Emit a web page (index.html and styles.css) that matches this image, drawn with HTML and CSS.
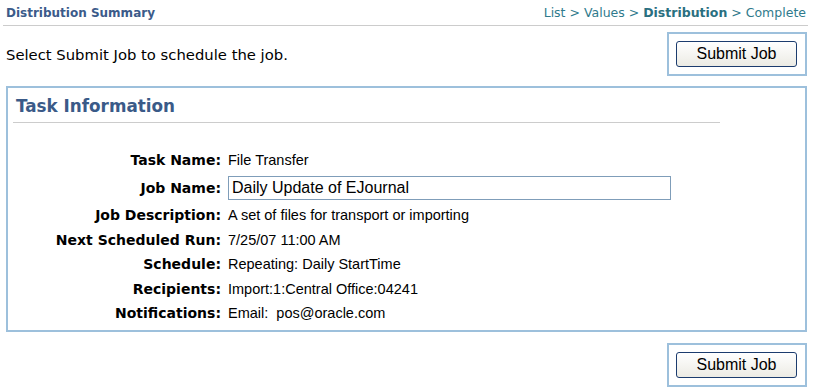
FILE: index.html
```html
<!DOCTYPE html>
<html lang="en">
<head>
    <meta charset="UTF-8">
    <title>Distribution Summary</title>
    <link rel="stylesheet" href="styles.css">
</head>
<body>
    <div class="page-header">
        <span class="page-title">Distribution Summary</span>
        <span class="crumbs">List &gt; Values &gt; <b>Distribution</b> &gt; Complete</span>
    </div>
    <div class="intro-row">
        <p class="intro">Select Submit Job to schedule the job.</p>
        <div class="btn-box"><button class="submit">Submit Job</button></div>
    </div>
    <div class="task-box">
        <h2 class="task-title">Task Information</h2>
        <div class="fields">
            <label>Task Name:</label><span>File Transfer</span>
            <label for="jobName">Job Name:</label><span><input type="text" id="jobName" value="Daily Update of EJournal"></span>
            <label>Job Description:</label><span>A set of files for transport or importing</span>
            <label>Next Scheduled Run:</label><span>7/25/07 11:00 AM</span>
            <label>Schedule:</label><span>Repeating: Daily StartTime</span>
            <label>Recipients:</label><span>Import:1:Central Office:04241</span>
            <label>Notifications:</label><span>Email:&nbsp; pos@oracle.com</span>
        </div>
    </div>
    <div class="bottom-row">
        <div class="btn-box"><button class="submit">Submit Job</button></div>
    </div>
</body>
</html>
```
FILE: styles.css
```css
body { margin: 0; background: #fff; font-family: "DejaVu Sans", Tahoma, sans-serif; color: #000; }
.page-header { display: flex; justify-content: space-between; align-items: center; margin: 0 7px 0 3px; height: 25px; border-bottom: 1px solid #cccccc; padding: 0 2px 0 3px; }
.page-title { font-weight: bold; font-size: 12px; color: #3b5b8a; }
.crumbs { font-size: 12.5px; color: #2f7a8c; }
.crumbs b { color: #2a6f80; }
.intro-row { display: flex; justify-content: space-between; align-items: center; margin: 6px 8px 0 6px; }
.intro { margin: 0; font-size: 14.8px; }
.btn-box { border: 2px solid #9dc0dc; padding: 7px 8px 7px 7px; }
.submit { display: block; width: 121px; height: 26px; font-family: "Liberation Sans", Arial, sans-serif; font-size: 16px; color: #000; background: linear-gradient(#ffffff, #ecebe4); border: 1px solid #1c3c6e; border-radius: 3px; padding: 0; }
.task-box { margin: 10px 8px 0 6px; border: 2px solid #9dc0dc; padding: 0 0 5px 0; }
.task-title { margin: 0 85px 0 5px; padding: 8px 0 6px 3px; font-size: 16.8px; color: #3a5a88; border-bottom: 1px solid #cccccc; }
.fields { display: grid; grid-template-columns: 213px 1fr; column-gap: 7px; margin-top: 25px; align-items: center; }
.fields label { text-align: right; font-weight: bold; font-size: 14px; height: 24.4px; line-height: 24.4px; }
.fields span { font-family: "Liberation Sans", Arial, sans-serif; font-size: 14.5px; line-height: 24.4px; }
.fields input { display: block; width: 443px; height: 24px; box-sizing: border-box; border: 1px solid #7f9db9; font-family: "Liberation Sans", Arial, sans-serif; font-size: 16px; padding: 0 3px; margin: 4px 0 3px; }
.bottom-row { display: flex; justify-content: flex-end; margin: 11px 8px 0 0; }
```
